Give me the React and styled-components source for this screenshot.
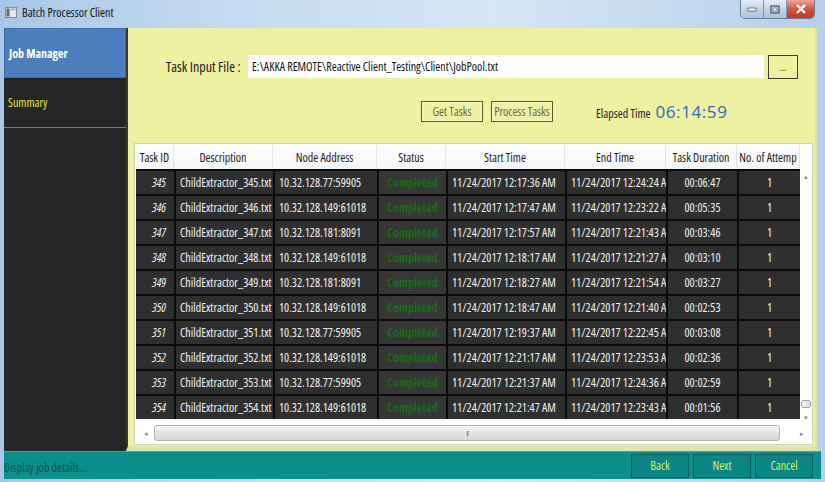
import React from "react";
import styled, { createGlobalStyle } from "styled-components";

const FONT = `"Open Sans", "Liberation Sans", sans-serif`;

const GlobalStyle = createGlobalStyle`
  html, body {
    margin: 0;
    padding: 0;
    background: #c4d9ef;
  }
  * { box-sizing: border-box; }
`;

const tasks = [
  { id: 345, node: "10.32.128.77:59905", start: "12:17:36 AM", end: "12:24:24 A", dur: "00:06:47" },
  { id: 346, node: "10.32.128.149:61018", start: "12:17:47 AM", end: "12:23:22 A", dur: "00:05:35" },
  { id: 347, node: "10.32.128.181:8091", start: "12:17:57 AM", end: "12:21:43 A", dur: "00:03:46" },
  { id: 348, node: "10.32.128.149:61018", start: "12:18:17 AM", end: "12:21:27 A", dur: "00:03:10" },
  { id: 349, node: "10.32.128.181:8091", start: "12:18:27 AM", end: "12:21:54 A", dur: "00:03:27" },
  { id: 350, node: "10.32.128.149:61018", start: "12:18:47 AM", end: "12:21:40 A", dur: "00:02:53" },
  { id: 351, node: "10.32.128.77:59905", start: "12:19:37 AM", end: "12:22:45 A", dur: "00:03:08" },
  { id: 352, node: "10.32.128.149:61018", start: "12:21:17 AM", end: "12:23:53 A", dur: "00:02:36" },
  { id: 353, node: "10.32.128.77:59905", start: "12:21:37 AM", end: "12:24:36 A", dur: "00:02:59" },
  { id: 354, node: "10.32.128.149:61018", start: "12:21:47 AM", end: "12:23:43 A", dur: "00:01:56" },
];

const columns = ["Task ID", "Description", "Node Address", "Status", "Start Time", "End Time", "Task Duration", "No. of Attemp"];
const GRID = "38px 99px 104px 69px 119px 101px 71px 63px";

export default function App() {
  return (
    <>
      <GlobalStyle />
      <Window>
        <TitleBar>
          <AppIcon>
            <svg width="12" height="11" viewBox="0 0 12 11">
              <rect x="0.5" y="0.5" width="11" height="10" fill="#e8e8e8" stroke="#8a8a8a" />
              <rect x="1.5" y="1.5" width="3" height="8" fill="#6a6a6a" />
              <rect x="5.5" y="1.5" width="5" height="2" fill="#9bb6d8" />
            </svg>
          </AppIcon>
          <Title>Batch Processor Client</Title>
          <Controls>
            <CtrlButton>
              <svg width="10" height="6" viewBox="0 0 10 6"><rect x="1" y="2" width="8" height="3" fill="#fff" stroke="#44556a" strokeWidth="0.8" /></svg>
            </CtrlButton>
            <CtrlButton>
              <svg width="10" height="9" viewBox="0 0 10 9"><rect x="1" y="1" width="8" height="7" fill="none" stroke="#44556a" strokeWidth="1.2" /><rect x="3" y="3" width="4" height="3" fill="#fff" stroke="#44556a" strokeWidth="0.6" /></svg>
            </CtrlButton>
            <CloseButton>
              <svg width="12" height="10" viewBox="0 0 12 10"><path d="M2 1 L10 9 M10 1 L2 9" stroke="#fff" strokeWidth="2.4" /></svg>
            </CloseButton>
          </Controls>
        </TitleBar>

        <Body>
          <Sidebar>
            <NavItem $active>Job Manager</NavItem>
            <NavItem>Summary</NavItem>
          </Sidebar>

          <Main>
            <InputRow>
              <Label>Task Input File :</Label>
              <PathInput>E:\AKKA REMOTE\Reactive Client_Testing\Client\JobPool.txt</PathInput>
              <BrowseButton>...</BrowseButton>
            </InputRow>

            <ActionRow>
              <ActionButton>Get Tasks</ActionButton>
              <ActionButton>Process Tasks</ActionButton>
              <Elapsed>
                Elapsed Time <ElapsedValue>06:14:59</ElapsedValue>
              </Elapsed>
            </ActionRow>

            <TablePanel>
              <TableArea>
                <Grid>
                  <HeaderRow>
                    {columns.map((c) => (
                      <HeaderCell key={c}>{c}</HeaderCell>
                    ))}
                  </HeaderRow>
                  {tasks.map((t) => (
                    <Row key={t.id}>
                      <IdCell>{t.id}</IdCell>
                      <Cell>ChildExtractor_{t.id}.txt</Cell>
                      <Cell>{t.node}</Cell>
                      <StatusCell>Completed</StatusCell>
                      <Cell>11/24/2017 {t.start}</Cell>
                      <Cell>11/24/2017 {t.end}</Cell>
                      <Cell $center>{t.dur}</Cell>
                      <Cell $center>1</Cell>
                    </Row>
                  ))}
                </Grid>
                <VScroll>
                  <Arrow>▴</Arrow>
                  <VTrack>
                    <VThumb />
                  </VTrack>
                  <Arrow>▾</Arrow>
                </VScroll>
              </TableArea>
              <HScroll>
                <Arrow>◂</Arrow>
                <HThumb>III</HThumb>
                <Arrow>▸</Arrow>
              </HScroll>
            </TablePanel>
          </Main>
        </Body>

        <StatusBar>
          <StatusText>Display job details...</StatusText>
          <NavButtons>
            <NavButton>Back</NavButton>
            <NavButton>Next</NavButton>
            <NavButton>Cancel</NavButton>
          </NavButtons>
        </StatusBar>
      </Window>
    </>
  );
}

const Window = styled.div`
  width: 825px;
  height: 482px;
  display: flex;
  flex-direction: column;
  background: linear-gradient(90deg, #a9c6e8 0%, #c7dcf2 30%, #d6e6f6 60%, #b7cfeb 100%);
  font-family: ${FONT};
  font-stretch: 75%;
  overflow: hidden;
`;

const TitleBar = styled.div`
  height: 28px;
  display: flex;
  align-items: flex-start;
  padding-left: 5px;
`;

const AppIcon = styled.div`
  margin-top: 7px;
  width: 12px;
  height: 11px;
  display: flex;
`;

const Title = styled.div`
  margin: 4px 0 0 5px;
  font-size: 12px;
  color: #111;
`;

const Controls = styled.div`
  margin-left: auto;
  margin-right: 10px;
  display: flex;
  height: 19px;
  border: 1px solid #6b7f98;
  border-top: none;
  border-radius: 0 0 5px 5px;
  overflow: hidden;
`;

const CtrlButton = styled.div`
  width: 23px;
  display: flex;
  align-items: center;
  justify-content: center;
  background: linear-gradient(#e3ecf7, #c2d3e8 50%, #afc4de);
  border-right: 1px solid #8296b0;
`;

const CloseButton = styled.div`
  width: 27px;
  display: flex;
  align-items: center;
  justify-content: center;
  background: linear-gradient(#e9a89b, #d4553f 50%, #c23a22);
`;

const Body = styled.div`
  display: flex;
  height: 423px;
  margin: 0 8px 0 4px;
`;

const Sidebar = styled.div`
  width: 122px;
  background: #252525;
  display: flex;
  flex-direction: column;
`;

const NavItem = styled.div`
  height: 50px;
  padding: 0 0 0 4px;
  display: flex;
  align-items: center;
  font-size: 12px;
  font-weight: ${(p) => (p.$active ? 700 : 400)};
  color: ${(p) => (p.$active ? "#ffffff" : "#e6e62a")};
  background: ${(p) => (p.$active ? "#4d7fbf" : "transparent")};
  border: ${(p) => (p.$active ? "1px solid #3b6aa6" : "none")};
  border-bottom: ${(p) => (p.$active ? "1px solid #3b6aa6" : "1px solid #7a7a7a")};
`;

const Main = styled.div`
  flex: 1;
  display: flex;
  flex-direction: column;
  background: #eef0a2;
  border-left: 2px solid #3b3b2a;
  border-right: 2px solid #d9e4a6;
  border-bottom: 5px solid #dce6ad;
  padding-top: 27px;
`;

const InputRow = styled.div`
  display: flex;
  align-items: center;
  height: 23px;
  margin-left: 38px;
`;

const Label = styled.div`
  font-size: 14px;
  color: #1a1a1a;
  width: 82px;
  white-space: nowrap;
`;

const PathInput = styled.div`
  width: 516px;
  height: 23px;
  background: #fff;
  font-size: 12px;
  color: #111;
  display: flex;
  align-items: center;
  padding-left: 4px;
  white-space: nowrap;
`;

const BrowseButton = styled.div`
  width: 30px;
  height: 24px;
  margin-left: 4px;
  border: 1px solid #3c3c28;
  font-size: 10px;
  display: flex;
  align-items: center;
  justify-content: center;
  color: #333;
`;

const ActionRow = styled.div`
  display: flex;
  align-items: center;
  height: 21px;
  margin-top: 23px;
  padding-left: 293px;
  gap: 8px;
`;

const ActionButton = styled.div`
  height: 21px;
  min-width: 62px;
  padding: 0 2px;
  border: 1px solid #5a5a3a;
  box-shadow: inset 0 0 0 1px #f7f7c8;
  font-size: 12px;
  color: #6a6a55;
  display: flex;
  align-items: center;
  justify-content: center;
  white-space: nowrap;
`;

const Elapsed = styled.div`
  margin-left: 35px;
  font-size: 12px;
  color: #1a1a1a;
  display: flex;
  align-items: baseline;
  gap: 5px;
  white-space: nowrap;
`;

const ElapsedValue = styled.span`
  font-size: 17px;
  font-stretch: 100%;
  letter-spacing: 0.6px;
  color: #3567c4;
`;

const TablePanel = styled.div`
  margin: 21px 0 0 6px;
  width: 679px;
  height: 302px;
  background: #fff;
  border: 1px solid #d0d6b4;
  display: flex;
  flex-direction: column;
  padding: 1px 0 0 1px;
`;

const TableArea = styled.div`
  display: flex;
  flex: 1;
`;

const Grid = styled.div`
  display: flex;
  flex-direction: column;
`;

const HeaderRow = styled.div`
  display: grid;
  grid-template-columns: ${GRID};
  height: 24px;
  background: linear-gradient(#ffffff, #f4f5f7);
`;

const HeaderCell = styled.div`
  font-size: 12px;
  color: #1a1a1a;
  display: flex;
  align-items: center;
  justify-content: center;
  border-right: 1px solid #dfe3e8;
  white-space: nowrap;
  overflow: hidden;
`;

const Row = styled.div`
  display: grid;
  grid-template-columns: ${GRID};
  height: 25px;
  background: #2f2f2f;
  border-top: 2px solid #0a0a0a;
`;

const Cell = styled.div`
  font-size: 12px;
  color: #f2f2f2;
  display: flex;
  align-items: center;
  justify-content: ${(p) => (p.$center ? "center" : "flex-start")};
  padding-left: ${(p) => (p.$center ? "0" : "4px")};
  border-left: 2px solid #0a0a0a;
  white-space: nowrap;
  overflow: hidden;
`;

const IdCell = styled(Cell)`
  justify-content: flex-end;
  align-items: flex-start;
  padding: 3px 8px 0 0;
  font-style: italic;
  border-left: none;
`;

const StatusCell = styled(Cell)`
  justify-content: center;
  padding-left: 0;
  color: #176b17;
  font-weight: 700;
  background: #373737;
`;

const VScroll = styled.div`
  width: 12px;
  margin-top: 24px;
  display: flex;
  flex-direction: column;
  align-items: center;
  background: #fdfdfd;
`;

const Arrow = styled.div`
  font-size: 7px;
  color: #8a8a8a;
  height: 14px;
  width: 12px;
  display: flex;
  align-items: center;
  justify-content: center;
`;

const VTrack = styled.div`
  flex: 1;
  width: 100%;
  display: flex;
  flex-direction: column;
  justify-content: flex-end;
`;

const VThumb = styled.div`
  height: 8px;
  margin: 0 1px 2px;
  border: 1px solid #a8a8a8;
  border-radius: 2px;
  background: linear-gradient(90deg, #f2f2f2, #dcdcdc);
`;

const HScroll = styled.div`
  height: 20px;
  display: flex;
  align-items: center;
  padding: 0 4px 2px 4px;
  gap: 2px;
`;

const HThumb = styled.div`
  flex: 1;
  height: 16px;
  margin-right: 14px;
  border: 1px solid #b3b3b3;
  border-radius: 3px;
  background: linear-gradient(#f6f6f6, #e3e3e3 50%, #d6d6d6);
  font-size: 7px;
  color: #777;
  display: flex;
  align-items: center;
  justify-content: center;
  letter-spacing: -1px;
`;

const StatusBar = styled.div`
  height: 28px;
  margin: 0 4px 3px 4px;
  background: #0a8f8c;
  border-top: 1px solid #3aa8a4;
  display: flex;
  align-items: center;
`;

const StatusText = styled.div`
  font-size: 12px;
  color: #174f4f;
  margin-top: 4px;
`;

const NavButtons = styled.div`
  margin-left: auto;
  margin-right: 8px;
  display: flex;
  gap: 4px;
`;

const NavButton = styled.div`
  width: 58px;
  height: 24px;
  border: 1px solid #0b5c5b;
  background: #0b8583;
  color: #d6f25a;
  font-size: 12px;
  display: flex;
  align-items: center;
  justify-content: center;
`;
